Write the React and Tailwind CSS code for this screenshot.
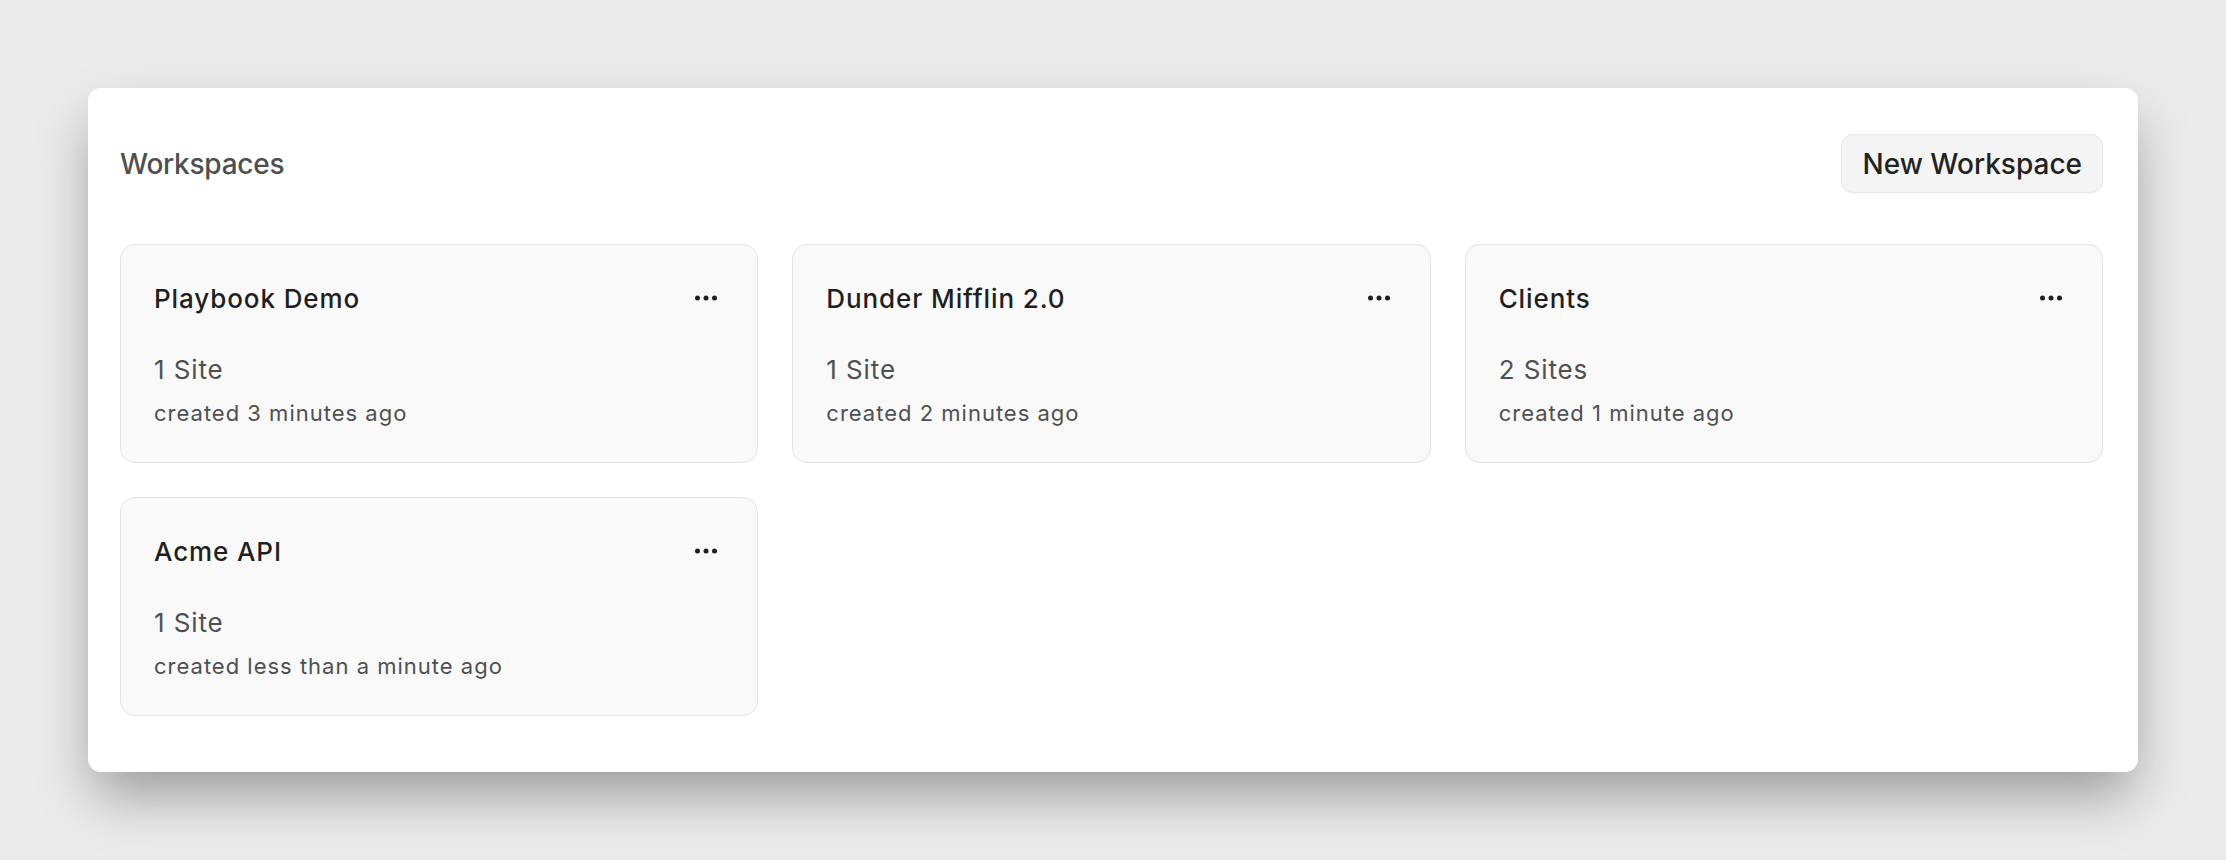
const workspaces = [
  { name: "Playbook Demo", sites: "1 Site", created: "created 3 minutes ago" },
  { name: "Dunder Mifflin 2.0", sites: "1 Site", created: "created 2 minutes ago" },
  { name: "Clients", sites: "2 Sites", created: "created 1 minute ago" },
  { name: "Acme API", sites: "1 Site", created: "created less than a minute ago" },
];

function Dots() {
  return (
    <svg width="22" height="6" viewBox="0 0 22 6" className="mr-[6px] text-[#1f1f1f]">
      <circle cx="2.5" cy="3" r="2.5" fill="currentColor" />
      <circle cx="11" cy="3" r="2.5" fill="currentColor" />
      <circle cx="19.5" cy="3" r="2.5" fill="currentColor" />
    </svg>
  );
}

function WorkspaceCard({ ws }) {
  return (
    <div className="flex flex-col rounded-[15px] border border-[#e3e3e3] bg-[#f9f9f9] pt-[35px] pb-[33px] pl-[33px] pr-[34px]">
      <div className="flex h-[36px] items-center justify-between">
        <span className="text-[26px] font-medium tracking-[0.9px] text-[#1f1f1f]">{ws.name}</span>
        <Dots />
      </div>
      <div className="mt-[36px] h-[36px] text-[26px] leading-[36px] tracking-[0.9px] text-[#505050]">{ws.sites}</div>
      <div className="mt-[9px] h-[32px] text-[22px] leading-[32px] tracking-[1px] text-[#505050]">{ws.created}</div>
    </div>
  );
}

export default function App() {
  return (
    <div
      className="min-h-screen w-full bg-[#ebebeb] pt-[88px] pl-[88px]"
      style={{ fontFamily: "Inter, 'Noto Sans', sans-serif" }}
    >
      <div className="w-[2050px] rounded-[13px] bg-white pt-[46px] pb-[56px] pl-[32px] pr-[35px] shadow-[0_28px_55px_-6px_rgba(0,0,0,0.35)]">
        <header className="flex items-center justify-between">
          <h1 className="text-[28px] font-medium tracking-[-0.25px] text-[#4f4f4f]">Workspaces</h1>
          <button className="h-[59px] rounded-[12px] border border-[#e6e6e6] bg-[#f4f4f4] px-[20px] text-[28px] font-medium text-[#222]">
            New Workspace
          </button>
        </header>
        <div className="mt-[51px] grid grid-cols-3 gap-[34px]">
          {workspaces.map((ws) => (
            <WorkspaceCard key={ws.name} ws={ws} />
          ))}
        </div>
      </div>
    </div>
  );
}
